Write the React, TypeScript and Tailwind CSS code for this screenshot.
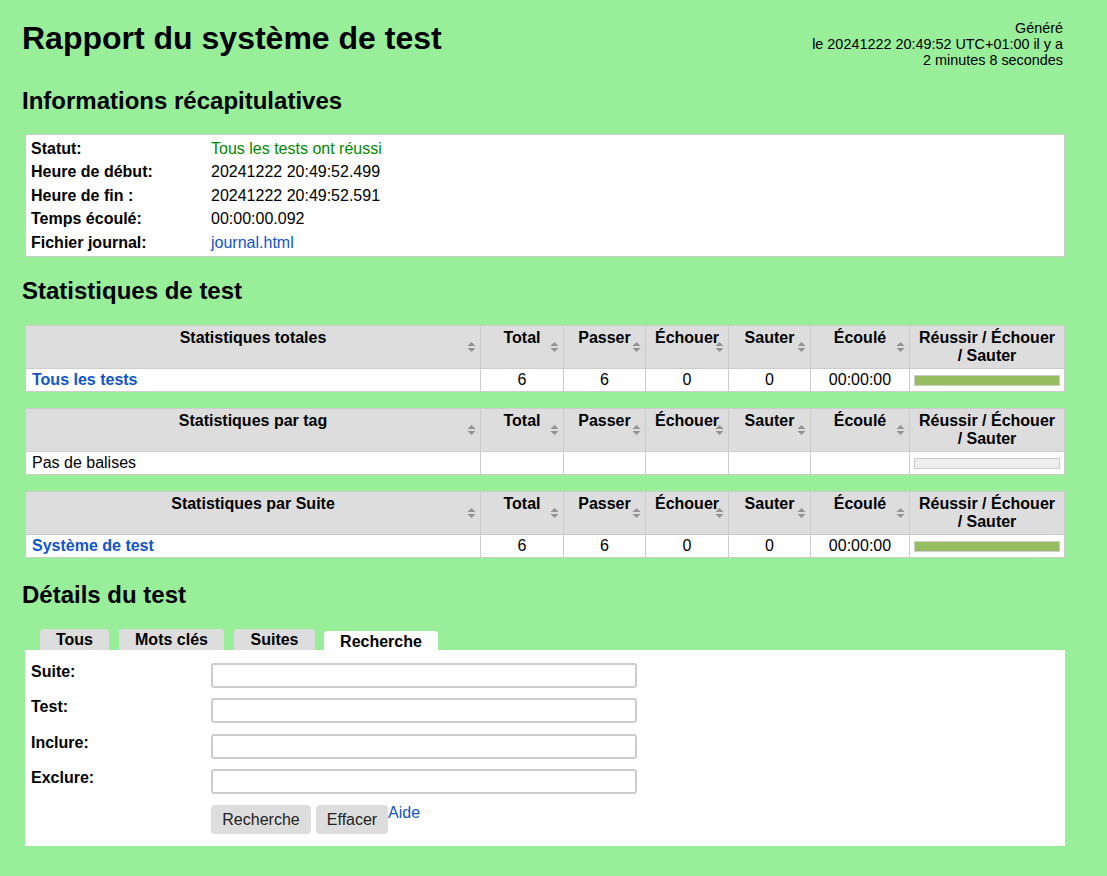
import { ReactNode } from 'react'

const font = { fontFamily: '"Liberation Sans", Arial, Helvetica, sans-serif' }

function SortIcon() {
  return (
    <svg
      className="absolute right-[4px] top-1/2 -translate-y-1/2"
      width="9"
      height="12"
      viewBox="0 0 9 12"
    >
      <polygon points="0.5,5 4.5,1 8.5,5" fill="#939393" />
      <polygon points="0.5,7 4.5,11 8.5,7" fill="#939393" />
    </svg>
  )
}

const cols = 'grid grid-cols-[455px_83px_82px_83px_82px_99px_155px]'

function HeadCell({ children, sort = true }: { children: ReactNode; sort?: boolean }) {
  return (
    <div className="relative h-[43px] border-r border-b border-[#ccc] bg-[#ddd] pt-[3px] text-center font-bold leading-[18px]">
      {children}
      {sort && <SortIcon />}
    </div>
  )
}

function Cell({ children, className = '' }: { children?: ReactNode; className?: string }) {
  return (
    <div className={`flex h-[23px] items-center border-r border-b border-[#ccc] bg-white pt-[1px] leading-[22px] ${className}`}>
      {children}
    </div>
  )
}

function Bar({ pass }: { pass: boolean }) {
  return (
    <div
      className={`mx-[4px] h-[11px] w-full border border-[#ccc] ${pass ? 'bg-[#97bd61]' : 'bg-[#eee]'}`}
    />
  )
}

interface Row {
  name: string
  link: boolean
  values?: string[]
}

function StatTable({ title, row }: { title: string; row: Row }) {
  return (
    <div className={`${cols} ml-[3px] w-[1040px] border-t border-l border-[#ccc]`}>
      <HeadCell>{title}</HeadCell>
      <HeadCell>Total</HeadCell>
      <HeadCell>Passer</HeadCell>
      <HeadCell>Échouer</HeadCell>
      <HeadCell>Sauter</HeadCell>
      <HeadCell>Écoulé</HeadCell>
      <HeadCell sort={false}>
        Réussir / Échouer
        <br />/ Sauter
      </HeadCell>
      <Cell className="pl-[6px]">
        {row.link ? (
          <span className="font-bold text-[#15c]">{row.name}</span>
        ) : (
          <span>{row.name}</span>
        )}
      </Cell>
      {[0, 1, 2, 3, 4].map((i) => (
        <Cell key={i} className="justify-center">
          {row.values ? row.values[i] : ''}
        </Cell>
      ))}
      <Cell>
        <Bar pass={!!row.values} />
      </Cell>
    </div>
  )
}

const summary: [string, ReactNode][] = [
  ['Statut:', <span className="text-[#080]">Tous les tests ont réussi</span>],
  ['Heure de début:', '20241222 20:49:52.499'],
  ['Heure de fin :', '20241222 20:49:52.591'],
  ['Temps écoulé:', '00:00:00.092'],
  ['Fichier journal:', <span className="text-[#15c]">journal.html</span>],
]

const tabs: { name: string; w: string }[] = [
  { name: 'Tous', w: 'w-[69px]' },
  { name: 'Mots clés', w: 'w-[105px]' },
  { name: 'Suites', w: 'w-[81px]' },
  { name: 'Recherche', w: 'w-[114px] ml-[-1px]' },
]
const fields = ['Suite:', 'Test:', 'Inclure:', 'Exclure:']

export default function App() {
  return (
    <div className="min-h-[876px] bg-[#9e9] pl-[22px] text-[16px] text-black" style={font}>
      <div className="w-[1043px] pt-[20px] pb-[31px]">
        <div className="flex items-start justify-between">
          <h1 className="text-[32px] font-bold leading-[36px]">Rapport du système de test</h1>
          <div className="pr-[2px] text-right text-[14.4px] leading-[16px]">
            <div>Généré</div>
            <div>le 20241222 20:49:52 UTC+01:00 il y a</div>
            <div>2 minutes 8 secondes</div>
          </div>
        </div>

        <h2 className="mt-[19px] text-[24px] font-bold leading-[28px]">Informations récapitulatives</h2>
        <div className="mt-[19px] ml-[3px] w-[1040px] border border-[#ccc] bg-white px-[5px] pt-[2px] pb-[2px]">
          {summary.map(([k, v]) => (
            <div key={k} className="grid h-[23.4px] grid-cols-[180px_1fr] items-center">
              <span className="font-bold">{k}</span>
              <span>{v}</span>
            </div>
          ))}
        </div>

        <h2 className="mt-[20px] text-[24px] font-bold leading-[28px]">Statistiques de test</h2>
        <div className="mt-[20px] flex flex-col gap-[16px]">
          <StatTable
            title="Statistiques totales"
            row={{ name: 'Tous les tests', link: true, values: ['6', '6', '0', '0', '00:00:00'] }}
          />
          <StatTable title="Statistiques par tag" row={{ name: 'Pas de balises', link: false }} />
          <StatTable
            title="Statistiques par Suite"
            row={{ name: 'Système de test', link: true, values: ['6', '6', '0', '0', '00:00:00'] }}
          />
        </div>

        <h2 className="mt-[23px] text-[24px] font-bold leading-[28px]">Détails du test</h2>
        <div className="mt-[20px] ml-[3px] w-[1040px]">
          <div className="flex h-[21px] items-end gap-[10px] pl-[15px]">
            {tabs.map((t) => (
              <div
                key={t.name}
                className={`${t.w} rounded-t-[4px] text-center font-bold leading-[21px] ${
                  t.name === 'Recherche' ? 'h-[19px] bg-white leading-[20px]' : 'h-[21px] bg-[#ddd]'
                }`}
              >
                {t.name}
              </div>
            ))}
          </div>
          <div className="bg-white pt-[12.7px] pb-[12px] pl-[6px]">
            <div className="flex flex-col gap-[10.6px]">
              {fields.map((f) => (
                <div key={f} className="flex items-start">
                  <span className="w-[180px] font-bold leading-[18px]">{f}</span>
                  <div className="h-[25px] w-[426px] rounded-[3px] border-2 border-[#ccc] bg-white" />
                </div>
              ))}
              <div className="flex items-start pl-[180px]">
                <button className="h-[29px] w-[100px] rounded-[4px] bg-[#ddd] text-[16px] text-[#222]">
                  Recherche
                </button>
                <button className="ml-[5px] h-[29px] w-[72px] rounded-[4px] bg-[#ddd] text-[16px] text-[#222]">
                  Effacer
                </button>
                <span className="leading-[16px] text-[#15c]">Aide</span>
              </div>
            </div>
          </div>
        </div>
      </div>
    </div>
  )
}
